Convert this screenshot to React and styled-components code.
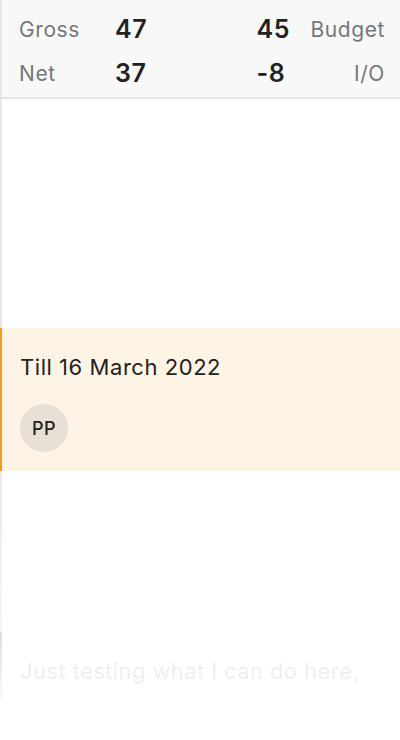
import styled, { createGlobalStyle } from "styled-components"

const GlobalStyle = createGlobalStyle`
    body {
        margin: 0;
        background: #ffffff;
        font-family: Inter, "Noto Sans", sans-serif;
        color: #222222;
    }
`

const Page = styled.div`
    width: 400px;
    height: 740px;
    overflow: hidden;
`

const Summary = styled.header`
    display: grid;
    grid-template-columns: 96px 1fr auto 95px;
    grid-auto-rows: 44px;
    align-items: center;
    height: 99px;
    box-sizing: border-box;
    padding: 7px 15px 0 17px;
    background: #f8f8f8;
    border-left: 2px solid #e6e6e6;
    border-bottom: 2px solid #e4e4e4;
`

const Label = styled.span`
    font-size: 21px;
    letter-spacing: 0.6px;
    color: #777777;
    text-align: ${(p) => (p.$right ? "right" : "left")};
`

const Value = styled.span`
    font-size: 25px;
    font-weight: 600;
    letter-spacing: 0.6px;
    color: #222222;
    grid-column: ${(p) => (p.$right ? "3" : "2")};
`

const List = styled.section`
    display: flex;
    flex-direction: column;
`

const Item = styled.div`
    box-sizing: border-box;
    height: ${(p) => p.$height}px;
    border-left: 2px solid #e8e8e8;
    ${(p) => p.$fade && `border-image: linear-gradient(${p.$fade}) 1;`}
`

const Highlight = styled.div`
    display: flex;
    flex-direction: column;
    align-items: flex-start;
    gap: 21px;
    height: 143px;
    box-sizing: border-box;
    padding: 24px 18px 0;
    background: #fef4e6;
    border-left: 2px solid #fa9b1e;
`

const Title = styled.div`
    font-size: 22px;
    letter-spacing: 0.55px;
    line-height: 31px;
    color: #222222;
`

const Avatar = styled.div`
    display: flex;
    align-items: center;
    justify-content: center;
    width: 48px;
    height: 48px;
    border-radius: 50%;
    background: #e8e0d6;
    font-size: 18px;
    font-weight: 500;
    letter-spacing: 0.5px;
    color: #222222;
`

const Preview = styled(Item)`
    padding: 24px 18px 0;
    font-size: 22px;
    letter-spacing: 0.4px;
    line-height: 31px;
    color: #efefef;
    white-space: nowrap;
`

function App() {
    return (
        <Page>
            <GlobalStyle />
            <Summary>
                <Label>Gross</Label>
                <Value>47</Value>
                <Value $right>45</Value>
                <Label $right>Budget</Label>
                <Label>Net</Label>
                <Value>37</Value>
                <Value $right>-8</Value>
                <Label $right>I/O</Label>
            </Summary>
            <List>
                <Item $height={229} />
                <Highlight>
                    <Title>Till 16 March 2022</Title>
                    <Avatar>PP</Avatar>
                </Highlight>
                <Item $height={161} $fade="#e9e9e9, #f6f6f6" />
                <Preview $height={68} $fade="#dcdcdc, #fafafa">
                    Just testing what I can do here,
                </Preview>
            </List>
        </Page>
    )
}

export default App
